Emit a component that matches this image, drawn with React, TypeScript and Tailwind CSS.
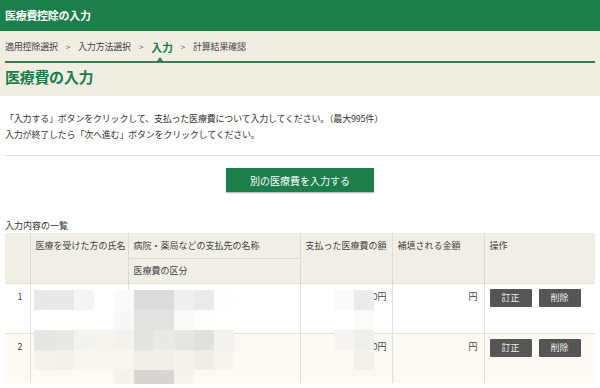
import React from "react";

const steps = ["適用控除選択", "入力方法選択", "入力", "計算結果確認"];

// pixelated (blurred) personal data over the rows
const mosaic: [number, number, string][] = [
  [0, 0, "#e8e8e8"], [1, 0, "#e9e9e9"], [2, 0, "#f5f5f5"], [4, 0, "#fafafa"], [5, 0, "#dcdcdc"], [6, 0, "#dcdcdc"],
  [7, 0, "#efefef"], [8, 0, "#eaeaea"], [9, 0, "#fdfdfd"], [15, 0, "#fafafa"], [16, 0, "#ebebeb"],
  [4, 1, "#f8f8f8"], [5, 1, "#e3e3e3"], [6, 1, "#e3e3e3"], [7, 1, "#f9f9fb"], [8, 1, "#fdfdfd"], [16, 1, "#fbfbfb"],
  [0, 2, "#e6e6e2"], [1, 2, "#e8e8e4"], [2, 2, "#f4f4ee"], [3, 2, "#f6f5ee"], [4, 2, "#f3f2ec"], [5, 2, "#e4e4e0"],
  [6, 2, "#e9e9e5"], [7, 2, "#e5e5e1"], [8, 2, "#e0e0dc"], [9, 2, "#f2f2ee"], [15, 2, "#f6f5f0"], [16, 2, "#eeeeec"],
  [0, 3, "#f4f2eb"], [1, 3, "#f3f1ea"], [2, 3, "#f8f6ef"], [3, 3, "#f8f6ef"], [4, 3, "#f8f6ef"], [5, 3, "#f0eee7"],
  [6, 3, "#f1efe8"], [7, 3, "#f4f2eb"], [8, 3, "#efede6"], [9, 3, "#f6f4ed"], [16, 3, "#f3f1ea"],
  [4, 4, "#f5f3ec"], [5, 4, "#d6d5d0"], [6, 4, "#d8d6d0"], [7, 4, "#f6f4ed"],
];

function Row({ n, alt }: { n: number; alt?: boolean }) {
  const bg = alt ? "bg-[#fcfaf3]" : "bg-white";
  return (
    <tr className={`${bg} h-[50px] align-top`}>
      <td className="border-t border-[#e2e0d8] text-right pr-[7px] pt-[6px]">{n}</td>
      <td className="border-l border-t border-[#e2e0d8]"></td>
      <td className="border-l border-t border-[#e2e0d8]"></td>
      <td className="border-l border-t border-[#e2e0d8] text-right pr-[5px] pt-[6px]">0円</td>
      <td className="border-l border-t border-[#e2e0d8] text-right pr-[6px] pt-[6px]">円</td>
      <td className="border-l border-t border-[#e2e0d8] pl-[5px] pt-[5px]">
        <div className="flex gap-[7px]">
          <button className="w-[42px] h-[18px] bg-[#555555] text-[#eeeeee] text-[9px] rounded-[1px]">訂正</button>
          <button className="w-[42px] h-[18px] bg-[#555555] text-[#eeeeee] text-[9px] rounded-[1px]">削除</button>
        </div>
      </td>
    </tr>
  );
}

export default function App() {
  return (
    <div className="w-[600px] h-[388px] overflow-hidden bg-white text-[#333333] font-['Meiryo_UI','Noto_Sans_CJK_JP',sans-serif]">
      {/* Top bar */}
      <div className="h-[32px] bg-[#1b7e4b] border-b border-[#dff0e2] flex items-center px-[5px]">
        <span className="text-white text-[11px] font-bold tracking-[-0.3px]">医療費控除の入力</span>
      </div>

      {/* Steps + heading */}
      <div className="bg-[#f0eee3] h-[64px] px-[5px]">
        <div className="h-[29px] pt-[1px] flex items-center gap-[7px] text-[9px] text-[#444444] tracking-[-0.2px]">
          {steps.map((s, i) => (
            <React.Fragment key={s}>
              {i > 0 && <span className="text-[8px] text-[#555555] px-[1px]">&gt;</span>}
              <span className={s === "入力" ? "text-[11px] font-bold text-[#1b7e4b]" : ""}>{s}</span>
            </React.Fragment>
          ))}
        </div>
        <div className="relative h-[2px] bg-[#3d7a55] w-[590px]">
          <div className="absolute left-[152px] -top-[4px] w-0 h-0 border-l-[3px] border-r-[3px] border-b-[4px] border-l-transparent border-r-transparent border-b-[#3d7a55]" />
        </div>
        <h1 className="mt-[4px] text-[15px] font-bold text-[#1b7e4b] leading-[20px] tracking-[-0.3px]">医療費の入力</h1>
      </div>

      {/* Instructions */}
      <div className="pl-[5px] pt-[15px] text-[9px] leading-[16px] text-[#333333] tracking-[-0.2px]">
        <p>「入力する」ボタンをクリックして、支払った医療費について入力してください。（最大995件）</p>
        <p>入力が終了したら「次へ進む」ボタンをクリックしてください。</p>
      </div>
      <div className="ml-[5px] mt-[12px] h-[1px] bg-[#e2e2e2]" />

      <div className="flex justify-center mt-[12px]">
        <button className="w-[148px] h-[24px] bg-[#1b7e4b] text-white text-[10px] shadow-[0_1px_1px_rgba(0,0,0,0.25)]">
          別の医療費を入力する
        </button>
      </div>

      <div className="pl-[5px] mt-[28px] text-[9px] leading-[12px]">入力内容の一覧</div>

      {/* Table */}
      <div className="relative ml-[5px] mt-[1px] w-[590px]">
        <table className="w-[590px] table-fixed border-collapse text-[9px] text-[#444444]">
          <colgroup>
            <col className="w-[25px]" />
            <col className="w-[98px]" />
            <col className="w-[172px]" />
            <col className="w-[92px]" />
            <col className="w-[92px]" />
            <col className="w-[111px]" />
          </colgroup>
          <thead className="bg-[#f0eee5]">
            <tr className="h-[25px]">
              <th rowSpan={2}></th>
              <th rowSpan={2} className="border-l border-[#dcdad2] font-normal text-left align-top pl-[5px] pt-[6px]">医療を受けた方の氏名</th>
              <th className="border-l border-b border-[#dcdad2] font-normal text-left pl-[5px]">病院・薬局などの支払先の名称</th>
              <th rowSpan={2} className="border-l border-[#dcdad2] font-normal text-left align-top pl-[5px] pt-[6px]">支払った医療費の額</th>
              <th rowSpan={2} className="border-l border-[#dcdad2] font-normal text-left align-top pl-[5px] pt-[6px]">補填される金額</th>
              <th rowSpan={2} className="border-l border-[#dcdad2] font-normal text-left align-top pl-[5px] pt-[6px]">操作</th>
            </tr>
            <tr className="h-[25px]">
              <th className="border-l border-[#dcdad2] font-normal text-left pl-[5px]">医療費の区分</th>
            </tr>
          </thead>
          <tbody>
            <Row n={1} />
            <Row n={2} alt />
          </tbody>
        </table>

        {/* mosaic overlay */}
        <div className="absolute left-[29px] top-[57px] w-[360px] h-[94px] overflow-hidden">
          {mosaic.map(([c, r, color]) => (
            <div
              key={`${c}-${r}`}
              className="absolute w-[20px] h-[20px]"
              style={{ left: c * 20, top: r * 20, backgroundColor: color }}
            />
          ))}
        </div>
      </div>
    </div>
  );
}
